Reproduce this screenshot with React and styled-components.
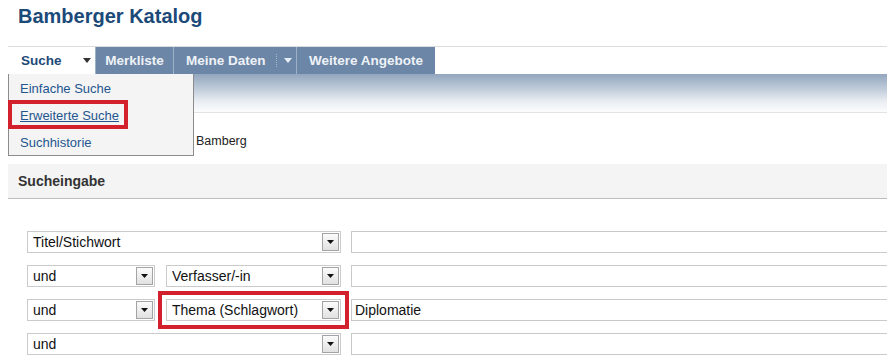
import React from "react";
import styled, { createGlobalStyle, css } from "styled-components";

const GlobalStyle = createGlobalStyle`
  html, body {
    margin: 0;
    padding: 0;
    background: #fff;
    overflow: hidden;
  }
  body {
    font-family: "Liberation Sans", Arial, sans-serif;
  }
`;

const searchRows = [
    { op: null, field: "Titel/Stichwort", value: "" },
    { op: "und", field: "Verfasser/-in", value: "" },
    { op: "und", field: "Thema (Schlagwort)", value: "Diplomatie", marked: true },
    { op: "und", field: null, value: "" },
];

const menuItems = [
    { label: "Einfache Suche" },
    { label: "Erweiterte Suche", marked: true },
    { label: "Suchhistorie" },
];

const Caret = ({ color = "#333" }) => (
    <svg width="8" height="5" viewBox="0 0 8 5">
        <path d="M0 0 L8 0 L4 5 Z" fill={color} />
    </svg>
);

const Select = ({ width, marked, children }) => (
    <SelectBox $w={width} $marked={marked}>
        <SelectText>{children}</SelectText>
        <SelectButton>
            <svg width="7" height="4" viewBox="0 0 7 4">
                <path d="M0 0 L7 0 L3.5 4 Z" fill="#111" />
            </svg>
        </SelectButton>
    </SelectBox>
);

const App = () => {
    return (
        <Page>
            <GlobalStyle />
            <Header>
                <Title>Bamberger Katalog</Title>
            </Header>

            <NavArea>
                <TabBar>
                    <Tab $active $w={87}>
                        Suche
                        <CaretSlot $gap={21}>
                            <Caret color="#333" />
                        </CaretSlot>
                    </Tab>
                    <Tab $w={78}>Merkliste</Tab>
                    <Tab $w={123} $start>
                        Meine Daten
                        <Divider />
                        <Caret color="#e8eef5" />
                    </Tab>
                    <Tab $w={139}>Weitere Angebote</Tab>
                </TabBar>
                <Band />

                <Dropdown>
                    {menuItems.map((item) => (
                        <MenuItem key={item.label} $marked={item.marked}>
                            <MenuLink $underline={item.marked}>{item.label}</MenuLink>
                        </MenuItem>
                    ))}
                </Dropdown>
            </NavArea>

            <InfoLine>Bamberg</InfoLine>

            <SectionBar>Sucheingabe</SectionBar>

            <Form>
                {searchRows.map((row, i) => (
                    <Row key={i}>
                        <Fields>
                            {row.op && !row.field && <Select width={314}>{row.op}</Select>}
                            {row.op && row.field && <Select width={128}>{row.op}</Select>}
                            {row.field && (
                                <Select width={row.op ? 175 : 314} marked={row.marked}>
                                    {row.field}
                                </Select>
                            )}
                        </Fields>
                        <TextInput>{row.value}</TextInput>
                    </Row>
                ))}
            </Form>
        </Page>
    );
};

export default App;

const Page = styled.div`
    width: 100%;
    min-height: 359px;
`;

const Header = styled.div`
    padding: 4px 0 0 18px;
    height: 42px;
    box-sizing: border-box;
`;

const Title = styled.h1`
    margin: 0;
    font-size: 20px;
    line-height: 24px;
    font-weight: bold;
    color: #1b4a79;
`;

const NavArea = styled.div`
    position: relative;
    margin-left: 8px;
    margin-top: 4px;
`;

const TabBar = styled.div`
    display: flex;
    height: 27px;
    border-top: 1px solid #dcdcdc;
`;

const Tab = styled.div`
    box-sizing: border-box;
    width: ${(p) => p.$w}px;
    display: flex;
    align-items: center;
    justify-content: ${(p) => (p.$start ? "flex-start" : "center")};
    padding: ${(p) => (p.$start ? "0 0 0 12px" : "0")};
    font-size: 13.5px;
    font-weight: bold;
    color: #eef2f7;
    background: #6b86a6;
    border-left: 1px solid #9fb1c6;

    ${(p) =>
        p.$active &&
        css`
            justify-content: flex-start;
            padding-left: 13px;
            background: #fff;
            color: #1d4a78;
            border-left: none;
        `}
`;

const CaretSlot = styled.span`
    display: inline-flex;
    margin-left: ${(p) => p.$gap}px;
`;

const Divider = styled.span`
    width: 0;
    height: 13px;
    margin: 0 7px 0 10px;
    border-left: 1px dotted #a8b8cb;
`;

const Band = styled.div`
    height: 38px;
    background: linear-gradient(to bottom, #93a6be 0%, #c0ccda 40%, #e8ecf1 70%, #fbfcfd 100%);
    border-bottom: 1px solid #e3e3e3;
`;

const Dropdown = styled.div`
    position: absolute;
    top: 28px;
    left: 0;
    width: 186px;
    height: 82px;
    box-sizing: border-box;
    padding-top: 1px;
    background: #f4f4f4;
    border: 1px solid #8c8c8c;
    border-top: none;
`;

const MenuItem = styled.div`
    position: relative;
    height: 27px;
    display: flex;
    align-items: center;
    padding-left: 11px;

    ${(p) =>
        p.$marked &&
        css`
            &::after {
                content: "";
                position: absolute;
                left: -1px;
                top: -2px;
                width: 112px;
                height: 21px;
                border: 4px solid #d2202c;
            }
        `}
`;

const MenuLink = styled.span`
    font-size: 13px;
    color: #1f5690;
    text-decoration: ${(p) => (p.$underline ? "underline" : "none")};
`;

const InfoLine = styled.div`
    height: 51px;
    box-sizing: border-box;
    padding: 20px 0 0 196px;
    font-size: 12.5px;
    line-height: 16px;
    color: #222;
`;

const SectionBar = styled.div`
    margin-left: 8px;
    height: 34px;
    display: flex;
    align-items: center;
    padding-left: 10px;
    background: #f4f4f4;
    border-bottom: 1px solid #bdbdbd;
    font-size: 14px;
    font-weight: bold;
    color: #333;
`;

const Form = styled.div`
    display: flex;
    flex-direction: column;
    gap: 12px;
    padding: 32px 0 0 27px;
`;

const Row = styled.div`
    display: flex;
    align-items: center;
    height: 22px;
`;

const Fields = styled.div`
    display: flex;
    gap: 11px;
    width: 314px;
`;

const SelectBox = styled.div`
    box-sizing: border-box;
    width: ${(p) => p.$w}px;
    height: 22px;
    display: flex;
    align-items: center;
    border: 1px solid #cbcbcb;
    background: #fff;
    padding: 0 1px 0 5px;

    ${(p) =>
        p.$marked &&
        css`
            outline: 4px solid #d2202c;
            outline-offset: 4px;
        `}
`;

const SelectText = styled.span`
    flex: 1;
    font-size: 14px;
    color: #111;
    white-space: nowrap;
    overflow: hidden;
`;

const SelectButton = styled.span`
    box-sizing: border-box;
    width: 17px;
    height: 18px;
    display: flex;
    align-items: center;
    justify-content: center;
    border: 1px solid #a4a4a4;
    background: linear-gradient(to bottom, #fbfbfb, #e1e1e1);
`;

const TextInput = styled.div`
    box-sizing: border-box;
    flex: 1;
    height: 22px;
    margin: 0 -4px 0 10px;
    padding-left: 3px;
    display: flex;
    align-items: center;
    border: 1px solid #c9c9c9;
    font-size: 14px;
    color: #111;
`;
